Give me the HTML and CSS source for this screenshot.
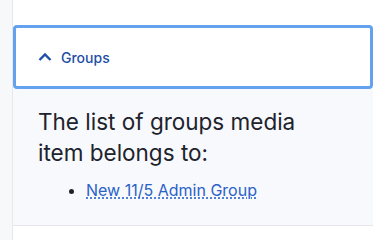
FILE: index.html
```html
<!doctype html>
<html lang="en">
<head>
  <meta charset="utf-8">
  <title>Media item groups</title>
  <link rel="stylesheet" href="styles.css">
</head>
<body>
  <div class="page">
    <div class="rail"></div>
    <div class="main">
      <details class="groups" open>
        <summary class="groups-head">
          <svg class="chevron" width="14" height="10" viewBox="0 0 14 10"><path d="M1.5 8 L7 2.5 L12.5 8" fill="none" stroke="#1f4fa5" stroke-width="2.4"/></svg>
          <span>Groups</span>
        </summary>
        <div class="groups-body">
          <p>The list of groups media item belongs to:</p>
          <ul>
            <li><a href="#">New 11/5 Admin Group</a></li>
          </ul>
        </div>
      </details>
    </div>
  </div>
</body>
</html>
```

FILE: styles.css
```css
html, body{
  margin: 0;
  padding: 0;
  background: #ffffff;
}
body{
  font-family: Inter, "Noto Sans", sans-serif;
  color: #20222c;
}
.page{
  display: grid;
  grid-template-columns: 13px 1fr;
  height: 240px;
}
.rail{
  background: #f7f8fa;
  border-right: 1px solid #e6e8ec;
}
.main{
  padding-top: 25px;
  padding-right: 1px;
}
.groups-head{
  list-style: none;
  display: flex;
  align-items: center;
  gap: 9px;
  height: 58px;
  padding-left: 22px;
  border: 3px solid #64a2f0;
  border-radius: 4px;
  background: #ffffff;
  color: #1f4fa5;
  font-size: 14px;
  font-weight: 500;
  cursor: pointer;
}
.groups-head::-webkit-details-marker{
  display: none;
}
.chevron{
  margin-top: -1px;
}
.groups-body{
  background: #f8f9fc;
  border-bottom: 1px solid #e4e6eb;
  padding: 17px 20px 25px 25px;
}
.groups-body p{
  margin: 0;
  width: 280px;
  font-size: 22.5px;
  line-height: 31px;
  color: #20222c;
}
.groups-body ul{
  margin: 12px 0 0;
  padding-left: 48px;
  font-size: 16px;
  line-height: 20px;
}
.groups-body a{
  color: #2a62c9;
  text-decoration: underline dotted;
  text-underline-offset: 2px;
}
```
